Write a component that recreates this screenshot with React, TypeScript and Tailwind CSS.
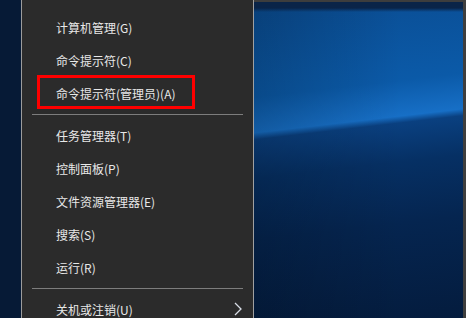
type Entry = { label: string; boxed?: boolean; sub?: boolean } | "sep";

const entries: Entry[] = [
  { label: "计算机管理(G)" },
  { label: "命令提示符(C)" },
  { label: "命令提示符(管理员)(A)", boxed: true },
  "sep",
  { label: "任务管理器(T)" },
  { label: "控制面板(P)" },
  { label: "文件资源管理器(E)" },
  { label: "搜索(S)" },
  { label: "运行(R)" },
  "sep",
  { label: "关机或注销(U)", sub: true },
];

const App = () => {
  return (
    <div
      className="flex h-[318px] w-[466px] overflow-hidden"
      style={{ fontFamily: '"Noto Sans CJK SC", "Noto Sans", sans-serif' }}
    >
      {/* desktop strip on the left */}
      <div className="w-[21px] shrink-0 bg-[#061a36]" />
      <div className="w-px shrink-0 bg-[#9c9c9c]" />

      {/* Win+X menu */}
      <div className="w-[231px] shrink-0 bg-[#2b2b2b] pt-[11px]">
        {entries.map((item, i) =>
          item === "sep" ? (
            <div key={i} className="mx-[10px] my-[4px] h-px bg-[#7d7d7d]" />
          ) : (
            <div
              key={i}
              className="relative flex h-[33px] items-center justify-between pl-[34px] pr-[11px] text-[12px] text-[#e8e8e8]"
            >
              <span>{item.label}</span>
              {item.sub && (
                <svg width="8" height="14" viewBox="0 0 8 14" className="mt-[-1px]">
                  <polyline
                    points="1,1 7,7 1,13"
                    fill="none"
                    stroke="#d8dde6"
                    strokeWidth="1.3"
                  />
                </svg>
              )}
              {item.boxed && (
                <div className="absolute left-[15px] top-[-2px] h-[34px] w-[158px] border-[3px] border-[#ff0000]" />
              )}
            </div>
          )
        )}
      </div>

      <div className="w-px shrink-0 bg-[#a0a0a0]" />

      {/* wallpaper */}
      <div className="flex flex-1 flex-col">
        <div className="h-[2px] bg-[#3d3d3d]" />
        <div className="flex-1 bg-[linear-gradient(180deg,#0a2448_0px,#0a2448_6px,transparent_10px),linear-gradient(90deg,rgba(0,0,0,0.18),transparent_70%),linear-gradient(173.4deg,#0a4d93_0%,#0b5aa8_28%,#176fc6_38.5%,#0a4080_40.5%,#063064_52%,#052550_70%,#041c3e_100%)]" />
      </div>

      <div className="w-[3px] shrink-0 bg-[#3e3e3e]" />
    </div>
  );
};

export default App;
